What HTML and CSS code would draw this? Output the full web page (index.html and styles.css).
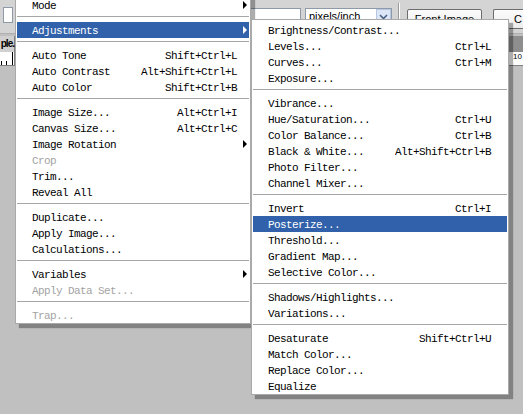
FILE: index.html
```html
<!DOCTYPE html>
<html>
<head>
<meta charset="utf-8">
<link rel="stylesheet" href="styles.css">
</head>
<body>
<div class="optbar">
  <div class="field field-a"></div>
  <div class="field field-b"></div>
  <div class="select"><span class="select-text">pixels/inch</span><span class="select-btn"><svg width="9" height="6" viewBox="0 0 9 6"><path d="M1 1 L4.5 4.5 L8 1" fill="none" stroke="#4d6185" stroke-width="1.6"/></svg></span></div>
  <div class="vsep"></div>
  <div class="btn btn-front">Front Image</div>
  <div class="btn btn-clear">C</div>
</div>
<div class="docrow">
  <div class="doc doc-left">
    <div class="doc-title">ple.</div>
    <div class="ruler ruler-left"><span class="tick t1"></span><span class="tick t2"></span><span class="tick t3"></span></div>
  </div>
  <div class="doc doc-right">
    <div class="doc-title doc-title-dark"></div>
    <div class="ruler ruler-right"><span class="ruler-num">10</span></div>
  </div>
</div>

<div class="menu menu-main">
  <div class="item has-sub"><span>Mode</span></div>
  <div class="sep"></div>
  <div class="item has-sub active"><span>Adjustments</span></div>
  <div class="sep"></div>
  <div class="item"><span>Auto Tone</span><span>Shift+Ctrl+L</span></div>
  <div class="item"><span>Auto Contrast</span><span>Alt+Shift+Ctrl+L</span></div>
  <div class="item"><span>Auto Color</span><span>Shift+Ctrl+B</span></div>
  <div class="sep"></div>
  <div class="item"><span>Image Size...</span><span>Alt+Ctrl+I</span></div>
  <div class="item"><span>Canvas Size...</span><span>Alt+Ctrl+C</span></div>
  <div class="item has-sub"><span>Image Rotation</span></div>
  <div class="item disabled"><span>Crop</span></div>
  <div class="item"><span>Trim...</span></div>
  <div class="item"><span>Reveal All</span></div>
  <div class="sep"></div>
  <div class="item"><span>Duplicate...</span></div>
  <div class="item"><span>Apply Image...</span></div>
  <div class="item"><span>Calculations...</span></div>
  <div class="sep"></div>
  <div class="item has-sub"><span>Variables</span></div>
  <div class="item disabled"><span>Apply Data Set...</span></div>
  <div class="sep"></div>
  <div class="item disabled"><span>Trap...</span></div>
</div>

<div class="menu menu-sub">
  <div class="item"><span>Brightness/Contrast...</span></div>
  <div class="item"><span>Levels...</span><span>Ctrl+L</span></div>
  <div class="item"><span>Curves...</span><span>Ctrl+M</span></div>
  <div class="item"><span>Exposure...</span></div>
  <div class="sep"></div>
  <div class="item"><span>Vibrance...</span></div>
  <div class="item"><span>Hue/Saturation...</span><span>Ctrl+U</span></div>
  <div class="item"><span>Color Balance...</span><span>Ctrl+B</span></div>
  <div class="item"><span>Black &amp; White...</span><span>Alt+Shift+Ctrl+B</span></div>
  <div class="item"><span>Photo Filter...</span></div>
  <div class="item"><span>Channel Mixer...</span></div>
  <div class="sep"></div>
  <div class="item"><span>Invert</span><span>Ctrl+I</span></div>
  <div class="item active"><span>Posterize...</span></div>
  <div class="item"><span>Threshold...</span></div>
  <div class="item"><span>Gradient Map...</span></div>
  <div class="item"><span>Selective Color...</span></div>
  <div class="sep"></div>
  <div class="item"><span>Shadows/Highlights...</span></div>
  <div class="item"><span>Variations...</span></div>
  <div class="sep"></div>
  <div class="item"><span>Desaturate</span><span>Shift+Ctrl+U</span></div>
  <div class="item"><span>Match Color...</span></div>
  <div class="item"><span>Replace Color...</span></div>
  <div class="item"><span>Equalize</span></div>
</div>
</body>
</html>
```

FILE: styles.css
```css
html, body {
  margin: 0;
  padding: 0;
}
body {
  width: 523px;
  height: 414px;
  overflow: hidden;
  position: relative;
  background: #c0c0c0;
  font-family: "Liberation Sans", Arial, sans-serif;
}

/* options bar */
.optbar {
  height: 34px;
  box-sizing: border-box;
  background: #d4d4d4;
  border-bottom: 1px solid #b0b0b0;
  display: flex;
  align-items: flex-start;
  padding-top: 7px;
}
.optbar > * { flex-shrink: 0; }
.field {
  height: 16px;
  box-sizing: border-box;
  background: #fff;
  border: 1px solid #8e9aa8;
}
.field-a { margin-left: 3px; width: 10px; }
.field-b { margin-left: 237px; width: 51px; margin-top: 1px; }
.select {
  margin-left: 4px;
  margin-top: 1px;
  width: 87px;
  height: 17px;
  box-sizing: border-box;
  background: #fff;
  border: 1px solid #8e9aa8;
  display: flex;
  justify-content: space-between;
  font-size: 11px;
  line-height: 15px;
  color: #000;
}
.select-text { padding-left: 3px; }
.select-btn {
  width: 15px;
  height: 15px;
  box-sizing: border-box;
  background: #dde6f6;
  border: 1px solid #b7c6e1;
  display: flex;
  align-items: center;
  justify-content: center;
}
.vsep {
  margin-left: 6px;
  margin-top: -4px;
  width: 1px;
  height: 30px;
  background: #999;
  border-right: 1px solid #fff;
}
.btn {
  margin-top: 2px;
  height: 20px;
  box-sizing: border-box;
  border: 1px solid #6d6d6d;
  border-radius: 2px;
  background: linear-gradient(#fbfbfb, #ececec);
  font-size: 11px;
  line-height: 18px;
  text-align: center;
  color: #000;
}
.btn-front { margin-left: 7px; width: 75px; }
.btn-clear {
  margin-left: 11px;
  width: 30px;
  border-right: none;
  border-radius: 2px 0 0 2px;
  text-align: left;
  padding-left: 20px;
}

/* document windows (edges) */
.docrow {
  display: flex;
  justify-content: space-between;
  padding-top: 2px;
}
.doc { width: 14px; }
.doc-left { width: 14px; border-right: 1px solid #808080; }
.doc-title {
  height: 16px;
  background: #d0d0d0;
  font-size: 10px;
  font-weight: bold;
  letter-spacing: -1px;
  line-height: 16px;
  color: #000;
  white-space: nowrap;
  text-align: right;
}
.doc-title-dark { background: #8e8e8e; }
.ruler {
  height: 13px;
  background: #fff;
  border-bottom: 1px solid #808080;
  position: relative;
}
.tick {
  position: absolute;
  bottom: 0;
  width: 1px;
  background: #000;
}
.t1 { left: 1px; height: 4px; }
.t2 { left: 6px; height: 4px; }
.t3 { left: 12px; height: 13px; }
.ruler-num {
  position: absolute;
  left: 4px;
  top: 0;
  font-size: 8px;
  line-height: 9px;
  color: #000;
}

/* menus */
.menu {
  position: absolute;
  background: #fff;
  border: 1px solid #a9a9a9;
  box-shadow: 4px 4px 1px rgba(0, 0, 0, 0.32);
  font-family: "Liberation Mono", "DejaVu Sans Mono", monospace;
  font-size: 11px;
  letter-spacing: -0.6px;
  color: #000;
}
.menu-main {
  left: 15px;
  top: -6px;
  width: 232px;
  padding: 2px 1px 0 1px;
}
.menu-sub {
  left: 251px;
  top: 19px;
  width: 254px;
  padding: 2px 1px 0 1px;
}
.item {
  height: 16px;
  line-height: 18px;
  display: flex;
  justify-content: space-between;
  padding: 0 12px 0 15px;
  position: relative;
  white-space: pre;
}
.menu-sub .item { padding-right: 16px; }
.item.active {
  background: #3161aa;
  color: #fff;
}
.item.disabled { color: #a3a3a3; }
.has-sub::after {
  content: "";
  position: absolute;
  right: 2px;
  top: 4px;
  border-left: 4px solid #000;
  border-top: 4px solid transparent;
  border-bottom: 4px solid transparent;
}
.has-sub.active::after { border-left-color: #fff; }
.sep {
  height: 9px;
  box-sizing: border-box;
  padding-top: 3px;
}
.sep::before {
  content: "";
  display: block;
  height: 1px;
  background: #a6a6a6;
}
```
